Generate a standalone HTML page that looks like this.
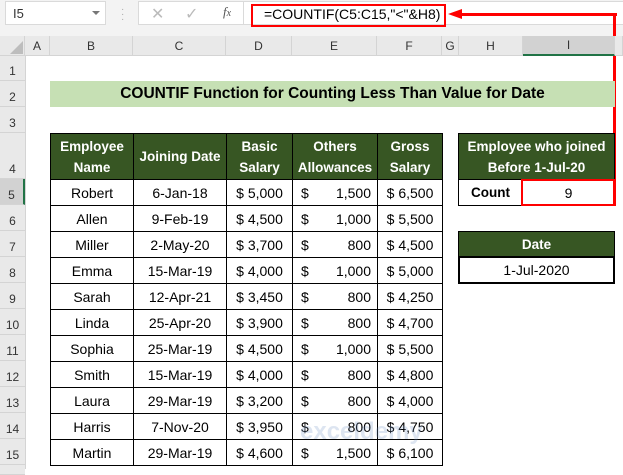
<!DOCTYPE html>
<html><head><meta charset="utf-8"><style>
*{margin:0;padding:0;box-sizing:border-box}
body{width:623px;height:469px;overflow:hidden;background:#fff;font-family:"Liberation Sans",sans-serif;position:relative}
.a{position:absolute}
.c{position:absolute;display:flex;align-items:center;justify-content:center;text-align:center;font-size:13.5px;color:#000}
.h{background:#375623;color:#fff;font-weight:bold;line-height:21px;font-size:13.5px}
.rn{position:absolute;left:0;width:25px;text-align:center;font-size:12px;color:#333;border-bottom:1px solid #d4d4d4;background:#e9e9e9;display:flex;align-items:flex-end;justify-content:center;padding-bottom:2px}
.cl{position:absolute;top:36px;height:20px;font-size:12px;color:#333;border-right:1px solid #d4d4d4;display:flex;align-items:center;justify-content:center}
</style></head><body>
<div class="a" style="left:0;top:0;width:623px;height:36px;background:#f3f3f3"></div>
<div class="a" style="left:5px;top:1px;width:101px;height:24px;background:#fff;border:1px solid #dadada;font-size:13px;padding:4px 0 0 7px;color:#333">I5</div>
<div class="a" style="left:92px;top:11px;border-left:4px solid transparent;border-right:4px solid transparent;border-top:4px solid #777"></div>
<div class="a" style="left:121px;top:7px;color:#aaa;font-size:10px;line-height:5px">·<br>·<br>·</div>
<div class="a" style="left:138px;top:1px;width:106px;height:24px;background:#fff;border:1px solid #dadada"></div>
<div class="a" style="left:151px;top:4px;color:#bbb;font-size:16px">✕</div>
<div class="a" style="left:185px;top:4px;color:#bbb;font-size:16px">✓</div>
<div class="a" style="left:223px;top:4px;color:#555;font-size:13px;font-style:italic;font-family:'Liberation Serif',serif">f<span style="font-size:10px">x</span></div>
<div class="a" style="left:244px;top:1px;width:379px;height:24px;background:#fff;border-top:1px solid #dadada;border-bottom:1px solid #dadada"></div>
<div class="a" style="left:251px;top:4px;width:195px;height:23px;border:2.5px solid #f00"></div>
<div class="a" style="left:264px;top:6px;font-size:14px;color:#000">=COUNTIF(C5:C15,"&lt;"&amp;H8)</div>
<!-- arrow -->
<div class="a" style="left:458px;top:13px;width:159px;height:3px;background:#f00"></div>
<div class="a" style="left:448px;top:9px;border-right:14px solid #f00;border-top:5px solid transparent;border-bottom:5px solid transparent"></div>
<div class="a" style="left:613px;top:13px;width:3px;height:193px;background:#f00"></div>
<!-- column headers -->
<div class="a" style="left:0;top:36px;width:623px;height:20px;background:#e9e9e9;border-bottom:1px solid #d4d4d4"></div>
<div class="a" style="left:10px;top:41px;border-left:13px solid transparent;border-bottom:13px solid #bdbdbd"></div>
<div class="cl" style="left:0;width:25px"></div>
<div class="cl" style="left:25px;width:25px">A</div>
<div class="cl" style="left:50px;width:83px">B</div>
<div class="cl" style="left:133px;width:93px">C</div>
<div class="cl" style="left:226px;width:66px">D</div>
<div class="cl" style="left:292px;width:85px">E</div>
<div class="cl" style="left:377px;width:65px">F</div>
<div class="cl" style="left:442px;width:17px">G</div>
<div class="cl" style="left:459px;width:64px">H</div>
<div class="cl" style="left:523px;width:92px;background:#d2d2d2;border-bottom:2px solid #217346">I</div>
<div class="cl" style="left:615px;width:8px"></div>
<!-- row numbers -->
<div class="rn" style="top:56px;height:25px">1</div>
<div class="rn" style="top:81px;height:26px">2</div>
<div class="rn" style="top:107px;height:26px">3</div>
<div class="rn" style="top:133px;height:46px">4</div>
<div class="rn" style="top:179px;height:26px;background:#d2d2d2;border-right:2px solid #217346">5</div>
<div class="rn" style="top:205px;height:26px">6</div>
<div class="rn" style="top:231px;height:26px">7</div>
<div class="rn" style="top:257px;height:26px">8</div>
<div class="rn" style="top:283px;height:26px">9</div>
<div class="rn" style="top:309px;height:26px">10</div>
<div class="rn" style="top:335px;height:26px">11</div>
<div class="rn" style="top:361px;height:26px">12</div>
<div class="rn" style="top:387px;height:26px">13</div>
<div class="rn" style="top:413px;height:26px">14</div>
<div class="rn" style="top:439px;height:26px">15</div>
<div class="rn" style="top:465px;height:10px"></div>
<div class="a" style="left:25px;top:56px;width:1px;height:413px;background:#d4d4d4"></div>
<!-- title -->
<div class="c" style="left:50px;top:81px;width:565px;height:26px;background:#c6e0b4;font-weight:bold;font-size:15.5px">COUNTIF Function for Counting Less Than Value for Date</div>
<!-- main table -->
<table class="a" style="left:50px;top:133px;border-collapse:collapse;font-size:13.5px;text-align:center">
<colgroup><col style="width:83px"><col style="width:93px"><col style="width:66px"><col style="width:85px"><col style="width:65px"></colgroup>
<tr style="height:46px" class="h"><td style="border:1px solid #000">Employee<br>Name</td><td style="border:1px solid #000">Joining Date</td><td style="border:1px solid #000">Basic<br>Salary</td><td style="border:1px solid #000">Others<br>Allowances</td><td style="border:1px solid #000">Gross<br>Salary</td></tr>
</table>
<div id="rows"></div>
<table class="a" style="left:50px;top:179px;border-collapse:collapse;font-size:14px;text-align:center;table-layout:fixed;width:392px">
<colgroup><col style="width:83px"><col style="width:93px"><col style="width:66px"><col style="width:85px"><col style="width:65px"></colgroup>
<style>#t td{border:1px solid #000;height:26px;padding:0}#t td.e{text-align:right;padding:0 6px 0 8px}#t td.e span{float:left}</style>
<tbody id="t">
<tr><td>Robert</td><td>6-Jan-18</td><td>$ 5,000</td><td class="e"><span>$</span>1,500</td><td>$ 6,500</td></tr>
<tr><td>Allen</td><td>9-Feb-19</td><td>$ 4,500</td><td class="e"><span>$</span>1,000</td><td>$ 5,500</td></tr>
<tr><td>Miller</td><td>2-May-20</td><td>$ 3,700</td><td class="e"><span>$</span>800</td><td>$ 4,500</td></tr>
<tr><td>Emma</td><td>15-Mar-19</td><td>$ 4,000</td><td class="e"><span>$</span>1,000</td><td>$ 5,000</td></tr>
<tr><td>Sarah</td><td>12-Apr-21</td><td>$ 3,450</td><td class="e"><span>$</span>800</td><td>$ 4,250</td></tr>
<tr><td>Linda</td><td>25-Apr-20</td><td>$ 3,900</td><td class="e"><span>$</span>800</td><td>$ 4,700</td></tr>
<tr><td>Sophia</td><td>25-Mar-19</td><td>$ 4,500</td><td class="e"><span>$</span>1,000</td><td>$ 5,500</td></tr>
<tr><td>Smith</td><td>15-Mar-19</td><td>$ 4,000</td><td class="e"><span>$</span>800</td><td>$ 4,800</td></tr>
<tr><td>Laura</td><td>29-Mar-19</td><td>$ 3,200</td><td class="e"><span>$</span>800</td><td>$ 4,000</td></tr>
<tr><td>Harris</td><td>7-Nov-20</td><td>$ 3,950</td><td class="e"><span>$</span>800</td><td>$ 4,750</td></tr>
<tr><td>Martin</td><td>29-Mar-19</td><td>$ 4,600</td><td class="e"><span>$</span>1,500</td><td>$ 6,100</td></tr>
</tbody></table>
<!-- right tables -->
<div class="c h" style="left:458px;top:133px;width:157px;height:47px;border:1px solid #000">Employee who joined<br>Before 1-Jul-20</div>
<div class="c" style="left:458px;top:179px;width:64px;height:27px;border:1px solid #000;border-right:none;font-weight:bold">Count</div>
<div class="c" style="left:521px;top:179px;width:95px;height:27px;border:2.5px solid #f00;font-size:14px">9</div>
<div class="c h" style="left:458px;top:231px;width:157px;height:26px;border:1px solid #000">Date</div>
<div class="c" style="left:458px;top:256px;width:157px;height:28px;border:2px solid #000;font-size:14px">1-Jul-2020</div>
<div class="a" style="left:300px;top:418px;font-size:24px;font-weight:bold;color:rgba(120,150,200,0.25)">exceldemy</div>
</body></html>
